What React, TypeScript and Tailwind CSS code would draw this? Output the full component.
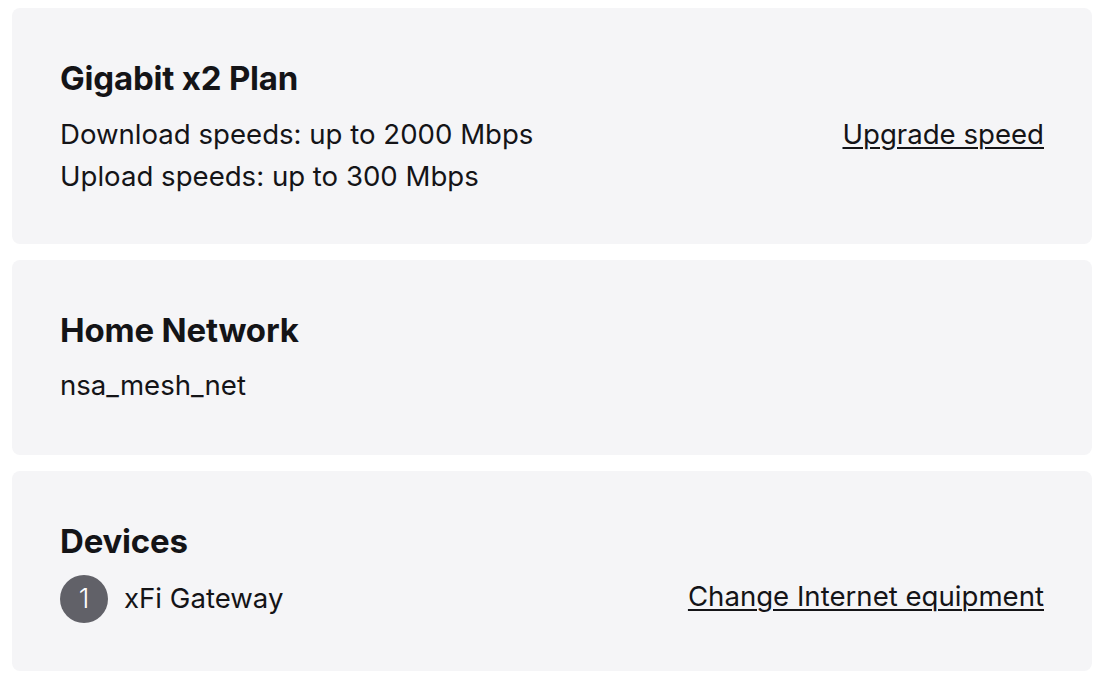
export default function App() {
  return (
    <div className="min-h-screen bg-white pl-3 pr-1 pt-2 text-[#141417]" style={{ fontFamily: 'Inter, "Noto Sans", sans-serif' }}>
      <div className="flex flex-col gap-4">
        <section className="rounded-lg bg-[#f5f5f7] px-12 pt-[50px] pb-[47px]">
          <h2 className="text-[33px] font-bold leading-[40px] tracking-[-0.2px]">Gigabit x2 Plan</h2>
          <div className="mt-[15px] flex items-start justify-between">
            <div className="text-[27.6px] leading-[42px]">
              <p>Download speeds: up to 2000 Mbps</p>
              <p>Upload speeds: up to 300 Mbps</p>
            </div>
            <a href="#" className="text-[27.6px] leading-[42px] underline decoration-[2px] underline-offset-[3px]">
              Upgrade speed
            </a>
          </div>
        </section>

        <section className="rounded-lg bg-[#f5f5f7] px-12 pt-[50px] pb-[49px]">
          <h2 className="text-[33px] font-bold leading-[40px] tracking-[-0.2px]">Home Network</h2>
          <p className="mt-[14px] text-[27.6px] leading-[42px]">nsa_mesh_net</p>
        </section>

        <section className="rounded-lg bg-[#f5f5f7] px-12 pt-[50px] pb-[48px]">
          <h2 className="text-[33px] font-bold leading-[40px] tracking-[-0.2px]">Devices</h2>
          <div className="mt-[14px] flex items-center justify-between">
            <div className="flex items-center gap-4">
              <span className="flex h-12 w-12 items-center justify-center rounded-full bg-[#616168] text-[27px] font-light text-white">1</span>
              <span className="text-[27.6px]">xFi Gateway</span>
            </div>
            <a href="#" className="-mt-[6px] text-[27.6px] leading-[42px] underline decoration-[2px] underline-offset-[3px]">
              Change Internet equipment
            </a>
          </div>
        </section>
      </div>
    </div>
  );
}
